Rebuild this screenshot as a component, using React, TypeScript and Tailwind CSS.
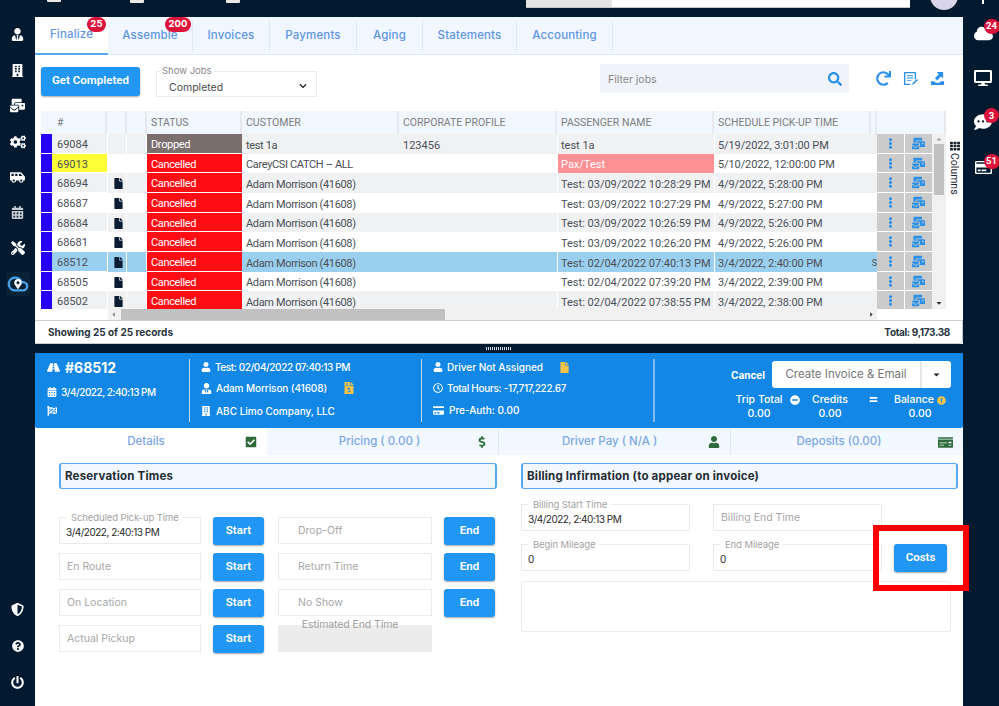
import {
  FaBuilding, FaCalendarAlt, FaCheckSquare, FaCloud, FaCogs, FaCommentDots, FaCreditCard, FaDesktop,
  FaDollarSign, FaEllipsisV, FaEquals, FaExclamationCircle, FaFile, FaFileInvoiceDollar, FaFlagCheckered,
  FaMailBulk, FaMapMarkerAlt, FaMinusCircle, FaMoneyCheck, FaPowerOff, FaQuestionCircle, FaRedo, FaRegClock,
  FaRegCreditCard, FaRoad, FaSearch, FaShieldAlt, FaShuttleVan, FaTh, FaTools, FaUser, FaUserTie,
  FaCaretDown, FaCaretLeft, FaCaretRight, FaCaretUp, FaChevronDown,
} from "react-icons/fa";
import { Cloud } from "lucide-react";

const ROW_GRID = "grid grid-cols-[11px_55px_20px_20px_95px_157px_158px_157px_157px_6px_28px_27px]";

const ROWS = [
  { id: "69084", status: "Dropped", customer: "test 1a", corp: "123456", pax: "test 1a", time: "5/19/2022, 3:01:00 PM" },
  { id: "69013", status: "Cancelled", customer: "CareyCSI CATCH – ALL", pax: "Pax/Test", time: "5/10/2022, 12:00:00 PM", flag: true },
  { id: "68694", status: "Cancelled", customer: "Adam Morrison (41608)", pax: "Test: 03/09/2022 10:28:29 PM", time: "4/9/2022, 5:28:00 PM", doc: true },
  { id: "68687", status: "Cancelled", customer: "Adam Morrison (41608)", pax: "Test: 03/09/2022 10:27:29 PM", time: "4/9/2022, 5:27:00 PM", doc: true },
  { id: "68684", status: "Cancelled", customer: "Adam Morrison (41608)", pax: "Test: 03/09/2022 10:26:59 PM", time: "4/9/2022, 5:26:00 PM", doc: true },
  { id: "68681", status: "Cancelled", customer: "Adam Morrison (41608)", pax: "Test: 03/09/2022 10:26:20 PM", time: "4/9/2022, 5:26:00 PM", doc: true },
  { id: "68512", status: "Cancelled", customer: "Adam Morrison (41608)", pax: "Test: 02/04/2022 07:40:13 PM", time: "3/4/2022, 2:40:00 PM", doc: true, selected: true },
  { id: "68505", status: "Cancelled", customer: "Adam Morrison (41608)", pax: "Test: 02/04/2022 07:39:20 PM", time: "3/4/2022, 2:39:00 PM", doc: true },
  { id: "68502", status: "Cancelled", customer: "Adam Morrison (41608)", pax: "Test: 02/04/2022 07:38:55 PM", time: "3/4/2022, 2:38:00 PM", doc: true },
];

const TABS = [
  { label: "Finalize", w: "w-[73px]", badge: "25", badgeClass: "top-[0px] left-[52px] w-[19px]" },
  { label: "Assemble", w: "w-[85px]", badge: "200", badgeClass: "-top-[3px] left-[57px] w-[26px]" },
  { label: "Invoices", w: "w-[77px]" },
  { label: "Payments", w: "w-[87px]" },
  { label: "Aging", w: "w-[66px]" },
  { label: "Statements", w: "w-[94px]" },
  { label: "Accounting", w: "w-[96px]" },
];

const MONT = "font-['Inter',sans-serif]";

function FloatInput({ label, value, className }: { label: string; value?: string; className: string }) {
  return (
    <div className={`relative h-[27px] border border-[#ebebeb] bg-white text-[10.5px] ${MONT} ${className}`}>
      {value ? (
        <>
          <span className="absolute -top-[6px] left-[7px] bg-white px-[4px] text-[9.5px] leading-[11px] tracking-[-0.1px] text-[#a3a3a3]">{label}</span>
          <div className="pl-[6px] pt-[8px] text-[10px] leading-[13px] tracking-[-0.5px] text-[#2b2b2b]">{value}</div>
        </>
      ) : (
        <div className="flex h-full items-center pl-[7px] text-[#a8a8a8]">{label}</div>
      )}
    </div>
  );
}

function BlueButton({ label, className }: { label: string; className: string }) {
  return (
    <button type="button" className={`rounded-[3px] bg-[#2196f3] text-[11.5px] font-semibold text-white shadow-[0_1px_2px_rgba(0,0,0,0.35)] ${className}`}>
      {label}
    </button>
  );
}

function SectionTitle({ label }: { label: string }) {
  return (
    <div className={`flex h-[26px] items-center rounded-[3px] border-2 border-[#55a9f2] border-y-[1.5px] bg-[#f2f8ff] pl-[4px] pt-[1px] text-[11.5px] font-bold tracking-[0.2px] text-[#232b33] ${MONT}`}>
      {label}
    </div>
  );
}

function Badge({ value, className }: { value: string; className: string }) {
  return (
    <span className={`absolute flex h-[15px] items-center justify-center rounded-full bg-[#dc143c] text-[9.5px] font-bold text-white ${className}`}>
      {value}
    </span>
  );
}

export default function App() {
  return (
    <div className="flex h-[706px] w-[999px] flex-col overflow-hidden bg-[#021a2f] font-['Roboto',sans-serif]">
      {/* top bar, cut by the window */}
      <header className="h-[17px] shrink-0 overflow-hidden">
        <div className="flex h-[8px] items-start">
          <div className="ml-[47px] h-[2px] w-[14px] rounded-b-[1px] bg-[#e8e8e8]" />
          <div className="ml-[69px] h-[3px] w-[14px] rounded-b-[1px] bg-[#e8e8e8]" />
          <div className="ml-[82px] h-[3px] w-[14px] rounded-b-[1px] bg-[#e8e8e8]" />
          <div className="ml-[286px] flex h-[8px] w-[384px] border-b border-[#c8c8c8] bg-white">
            <div className="h-full w-[86px] bg-[#e4e4e4]" />
          </div>
          <div className="ml-[20px] -mt-[18px] size-[28px] rounded-full bg-[#d9d5ea]" />
          <div className="ml-[24px] h-[4px] w-[2px] bg-white" />
        </div>
      </header>

      <div className="flex min-h-0 flex-1">
        {/* left rail */}
        <aside className="flex w-[35px] shrink-0 flex-col items-center pb-[5px] text-white [&>div]:flex [&>div]:w-full [&>div]:items-center [&>div]:justify-center">
          <div className="h-[35.6px]"><FaUserTie className="text-[13px]" /></div>
          <div className="h-[35.6px]"><FaBuilding className="text-[13px]" /></div>
          <div className="h-[35.6px]"><FaMailBulk className="text-[15px]" /></div>
          <div className="h-[35.6px]"><FaCogs className="text-[16px]" /></div>
          <div className="h-[35.6px]"><FaShuttleVan className="text-[15px]" /></div>
          <div className="h-[35.6px]"><FaCalendarAlt className="text-[13px] text-[#c9ced3]" /></div>
          <div className="h-[35.6px]"><FaTools className="text-[14px]" /></div>
          <div className="h-[35.6px]">
            <div className="relative flex h-[24px] w-[24px] items-center justify-center rounded-[2px] bg-[#0a2238]">
              <Cloud className="size-[22px] fill-[#0a2238] text-[#4aa3ea]" strokeWidth={2.6} />
              <FaMapMarkerAlt className="absolute text-[10px] text-white" />
            </div>
          </div>
          <div className="mt-auto h-[36.5px]"><FaShieldAlt className="text-[13px]" /></div>
          <div className="h-[36.5px]"><FaQuestionCircle className="text-[12px]" /></div>
          <div className="h-[36.5px]"><FaPowerOff className="text-[13px]" /></div>
        </aside>

        <main className="flex w-[928px] shrink-0 flex-col bg-white">
          {/* section tabs */}
          <nav className={`flex h-[38px] shrink-0 border-b border-[#d9eaf8] bg-[#f0f7ff] text-[11.5px] font-medium tracking-[0.15px] text-[#5f94e4] ${MONT}`}>
            {TABS.map((t, i) => (
              <div
                key={t.label}
                className={`relative flex items-center justify-center ${t.w} ${i === 0 ? "-mb-px border-b-2 border-[#55a9f2] bg-white" : "my-[3px] border-r border-[#dde9f5]"}`}
              >
                {t.label}
                {t.badge && <Badge value={t.badge} className={t.badgeClass} />}
              </div>
            ))}
          </nav>

          {/* toolbar */}
          <div className="flex h-[56px] shrink-0 items-start">
            <BlueButton label="Get Completed" className="ml-[6px] mt-[12px] h-[29px] w-[99px] pb-[2px]" />
            <div className={`relative ml-[16px] mt-[16px] flex h-[26px] w-[161px] items-center justify-between border border-[#ebebeb] pl-[12px] pr-[9px] text-[10.5px] text-[#4a4a4a] ${MONT}`}>
              <span className="absolute -top-[7px] left-[3px] bg-white px-[2px] text-[9.5px] leading-[11px] text-[#8a8a8a]">Show Jobs</span>
              <span className="pt-[8px]">Completed</span>
              <FaChevronDown className="mt-[3px] text-[8px] text-[#222]" />
            </div>
            <div className={`ml-[283px] mt-[9px] flex h-[29px] w-[249px] items-center justify-between bg-[#f0f3f9] pl-[8px] pr-[7px] text-[10.5px] text-[#8a8a8a] ${MONT}`}>
              <span className="pt-[2px]">Filter jobs</span>
              <FaSearch className="text-[14px] text-[#2b90e8]" />
            </div>
            <div className="ml-[27px] mt-[16px] flex items-center gap-[12px] text-[#2b90e8]">
              <FaRedo className="text-[15px]" />
              <svg viewBox="0 0 16 16" fill="currentColor" className="size-[15px]">
                <path d="M2 1h11a1 1 0 0 1 1 1v6l-1.5 1.5v-7h-10v11h5L8 15H2a1 1 0 0 1-1-1V2a1 1 0 0 1 1-1z" />
                <path d="M4 4.5h7v1H4zM4 7h7v1H4zM4 9.5h5v1H4z" />
                <path d="M15 8.5l1 1-4.5 4.5-1.8.6.6-1.8z" />
              </svg>
              <svg viewBox="0 0 16 16" fill="currentColor" className="size-[15px]">
                <path d="M14 1v7l-2.2-2.2L7.5 10 5.2 7.7l4.2-4.2L7.2 1z" />
                <path d="M1 11h3.5l1.5 1.5h4l1.5-1.5H15v3.5a.5.5 0 0 1-.5.5h-13a.5.5 0 0 1-.5-.5z" />
              </svg>
            </div>
          </div>

          {/* jobs table */}
          <div className="flex h-[209px] shrink-0 pl-[6px]">
            <div className="w-[905px]">
              <div className="grid h-[23px] grid-cols-[66px_20px_20px_95px_157px_158px_157px_157px_6px_1fr] bg-[#f0f7ff] text-[10.5px] text-[#7d7d7d]">
                {["#", "", "", "STATUS", "CUSTOMER", "CORPORATE PROFILE", "PASSENGER NAME", "SCHEDULE PICK-UP TIME", "", ""].map((h, i) => (
                  <div key={i} className={`flex items-center border-r-2 border-[#e6eaee] pl-[4px] ${i === 0 ? "pl-[16px]" : ""} ${i === 9 ? "border-r-0" : ""}`}>
                    {h}
                  </div>
                ))}
              </div>
              <div className="flex">
                <div className="h-[174.5px] w-[891px] overflow-hidden">
                  {ROWS.map((r, i) => {
                    const bg = r.selected ? "bg-[#9bcfef]" : i % 2 === 0 ? "bg-[#f0f1f3]" : "bg-white";
                    return (
                      <div key={r.id} className={`${ROW_GRID} ${i % 3 === 1 ? "h-[19px]" : "h-[20px]"} text-[11px] leading-[13px] text-[#4a4f55] ${bg}`}>
                        <div className="border-b border-white bg-[#2500f5]" />
                        <div className={`flex items-center border-b border-white pl-[5px] pt-[2px] ${r.flag ? "bg-[#ffff38]" : ""}`}>{r.id}</div>
                        <div className="flex items-center justify-center border-x border-white pl-[2px] pt-[1px]">
                          {r.doc && <FaFile className="text-[11px] text-[#0b1d33]" />}
                        </div>
                        <div className="border-r border-white" />
                        <div className={`flex items-center border-b border-white pl-[4px] pt-[2px] tracking-[-0.35px] text-white ${r.status === "Dropped" ? "bg-[#7b6f6d]" : "bg-[#ff0d14]"}`}>
                          {r.status}
                        </div>
                        <div className="flex items-center pl-[4px] pt-[2px] tracking-[-0.35px]">{r.customer}</div>
                        <div className="flex items-center pl-[4px] pt-[2px]">{r.corp}</div>
                        <div className={`flex items-center border-l border-white pl-[3px] pt-[2px] ${r.flag ? "bg-[#ff9094] text-white" : ""}`}>{r.pax}</div>
                        <div className="flex items-center border-l border-white pl-[3px] pt-[2px] tracking-[-0.1px]">{r.time}</div>
                        <div className="flex items-center justify-end overflow-hidden pt-[2px] text-[9px]">{r.selected ? "S" : ""}</div>
                        <div className="flex items-center justify-center border-b border-r border-white bg-[#cbcbcb]">
                          <FaEllipsisV className="text-[11px] text-[#2b90e8]" />
                        </div>
                        <div className="flex items-center justify-center border-b border-white bg-[#cbcbcb]">
                          <FaMailBulk className="text-[13px] text-[#2b90e8]" />
                        </div>
                      </div>
                    );
                  })}
                </div>
                <div className="flex h-[174.5px] w-[14px] flex-col items-center bg-[#f1f1f1]">
                  <FaCaretUp className="mt-[1px] text-[8px] text-[#a8a8a8]" />
                  <div className="mt-[1px] h-[51px] w-[10px] bg-[#c1c1c1]" />
                  <FaCaretDown className="mb-[2px] mt-auto text-[8px] text-[#333]" />
                </div>
              </div>
              <div className="flex h-[11.5px]">
                <div className="w-[67px]" />
                <div className="flex w-[769px] items-center bg-[#f1f1f1]">
                  <FaCaretLeft className="ml-[2px] text-[7px] text-[#888]" />
                  <div className="ml-[4px] h-full w-[324px] bg-[#c1c1c1]" />
                  <FaCaretRight className="ml-auto mr-[2px] text-[7px] text-[#444]" />
                </div>
              </div>
            </div>
            <div className="flex w-[17px] flex-col items-center pt-[30px] text-[#1d2733]">
              <FaTh className="text-[10px]" />
              <span className="mt-[2px] text-[10.5px] [writing-mode:vertical-rl]">Columns</span>
            </div>
          </div>

          {/* totals */}
          <div className={`flex h-[24px] shrink-0 items-center justify-between rounded-br-[4px] border-y border-r border-[#c9ced3] pl-[13px] pr-[12px] text-[10px] font-bold text-[#2a3540] ${MONT}`}>
            <span>Showing 25 of 25 records</span>
            <span className="tracking-[-0.35px]">Total: 9,173.38</span>
          </div>

          {/* splitter */}
          <div className="-mx-px flex h-[9px] shrink-0 items-center justify-center bg-[#021a2f]">
            <div className="h-[3px] w-[26px] bg-[repeating-linear-gradient(90deg,#d7dde2_0,#d7dde2_1px,transparent_1px,transparent_2px)]" />
          </div>

          {/* selected job */}
          <section className={`flex h-[75px] shrink-0 rounded-b-[2px] bg-[#1387e6] text-[10px] font-medium text-white ${MONT}`}>
            <div className="w-[154px] pl-[12px] pt-[6px]">
              <div className="flex items-center gap-[5px] text-[14px] font-bold leading-[17px]">
                <FaRoad className="text-[13px]" /> #68512
              </div>
              <div className="mt-[9px] flex items-center gap-[4px] leading-[14px] tracking-[-0.5px]">
                <FaCalendarAlt className="text-[10px]" /> 3/4/2022, 2:40:13 PM
              </div>
              <FaFlagCheckered className="mt-[7px] text-[10px]" />
            </div>
            <div className="my-[6px] w-[232px] border-l border-[#b7dbf7] pl-[11px]">
              <div className="flex h-[16px] items-center gap-[4px] tracking-[-0.4px]"><FaUser className="text-[10px]" /> Test: 02/04/2022 07:40:13 PM</div>
              <div className="mt-[5px] flex h-[16px] items-center gap-[4px] tracking-[-0.1px]">
                <FaUserTie className="text-[11px]" /> Adam Morrison (41608)
                <FaFileInvoiceDollar className="ml-[12px] text-[12px] text-[#f2c34b]" />
              </div>
              <div className="mt-[7px] flex h-[16px] items-center gap-[5px]"><FaBuilding className="text-[10px]" /> ABC Limo Company, LLC</div>
            </div>
            <div className="my-[6px] w-[232px] border-l border-[#b7dbf7] pl-[11px]">
              <div className="flex h-[16px] items-center gap-[4px]">
                <FaUser className="text-[10px]" /> Driver Not Assigned
                <FaFile className="ml-[12px] text-[11px] text-[#f2c34b]" />
              </div>
              <div className="mt-[5px] flex h-[16px] items-center gap-[4px] tracking-[-0.3px]"><FaRegClock className="text-[10px]" /> Total Hours: -17,717,222.67</div>
              <div className="mt-[6px] flex h-[16px] items-center gap-[5px]"><FaCreditCard className="text-[11px]" /> Pre-Auth: 0.00</div>
            </div>
            <div className="my-[6px] flex-1 border-l-2 border-[#7fbdf0] pr-[12px] pt-[2px]">
              <div className="flex items-center justify-end">
                <span className="mr-[7px] pt-[1px] font-bold">Cancel</span>
                <div className="flex h-[27px] w-[179px] overflow-hidden rounded-[3px] bg-white text-[11.5px] font-normal text-[#777]">
                  <div className="flex flex-1 items-center justify-center">Create Invoice &amp; Email</div>
                  <div className="flex w-[31px] items-center justify-center border-l-2 border-[#e6e6e6]">
                    <FaCaretDown className="text-[9px] text-[#222]" />
                  </div>
                </div>
              </div>
              <div className="mt-[5px] flex whitespace-nowrap pl-[79px] text-[10.5px] text-white">
                <div className="w-[50px] text-center leading-[14px]">Trip Total<div>0.00</div></div>
                <div className="w-[22px] pt-[2px]"><FaMinusCircle className="mx-auto text-[10px]" /></div>
                <div className="w-[48px] text-center leading-[14px]">Credits<div>0.00</div></div>
                <div className="w-[38px] pt-[2px]"><FaEquals className="mx-auto text-[9px]" /></div>
                <div className="w-[56px] text-center leading-[14px]">
                  <span className="inline-flex items-center gap-[3px]">Balance <FaExclamationCircle className="text-[9px] text-[#f2c34b]" /></span>
                  <div>0.00</div>
                </div>
              </div>
            </div>
          </section>

          {/* detail tabs */}
          <div className={`flex h-[27px] shrink-0 bg-[#f2f8ff] pt-px text-[11.5px] font-medium text-[#7ea6e6] ${MONT}`}>
            <div className="relative -mt-px flex w-[232px] items-center justify-center bg-white pr-[10px] pt-px">
              Details
              <FaCheckSquare className="absolute right-[10px] text-[12px] text-[#2f6b3a]" />
            </div>
            <div className="relative flex w-[232px] items-center justify-center border-r border-[#dde9f5] pr-[6px]">
              Pricing ( 0.00 )
              <FaDollarSign className="absolute right-[10px] text-[12px] text-[#2f6b3a]" />
            </div>
            <div className="relative flex w-[232px] items-center justify-center border-r border-[#dde9f5] pr-[10px]">
              Driver Pay ( N/A )
              <FaUser className="absolute right-[10px] text-[12px] text-[#2f6b3a]" />
            </div>
            <div className="relative flex w-[232px] items-center justify-center pr-[16px]">
              Deposits (0.00)
              <FaMoneyCheck className="absolute right-[10px] text-[15px] text-[#2f6b3a]" />
            </div>
          </div>

          {/* reservation and billing forms */}
          <div className="flex gap-[24px] pl-[24px] pr-[5px] pt-[8px]">
            <div className="w-[438px]">
              <SectionTitle label="Reservation Times" />
              <div className="mt-[28px] grid grid-cols-[142px_53px_154px_51px] gap-x-[12px] gap-y-[8px]">
                <FloatInput label="Scheduled Pick-up Time" value="3/4/2022, 2:40:13 PM" className="" />
                <BlueButton label="Start" className="h-[28px] w-[51px]" />
                <FloatInput label="Drop-Off" className="[&>div]:pl-[19px]" />
                <BlueButton label="End" className="h-[28px]" />
                <FloatInput label="En Route" className="" />
                <BlueButton label="Start" className="h-[28px] w-[51px]" />
                <FloatInput label="Return Time" className="[&>div]:pl-[19px]" />
                <BlueButton label="End" className="h-[28px]" />
                <FloatInput label="On Location" className="" />
                <BlueButton label="Start" className="h-[28px] w-[51px]" />
                <FloatInput label="No Show" className="[&>div]:pl-[19px]" />
                <BlueButton label="End" className="h-[28px]" />
                <FloatInput label="Actual Pickup" className="" />
                <BlueButton label="Start" className="h-[28px] w-[51px]" />
                <div className={`h-[27px] bg-[#ececec] pr-[10px] text-center text-[10.5px] tracking-[-0.1px] text-[#a0a0a0] ${MONT}`}>
                  <span className="relative -top-[8px]">Estimated End Time</span>
                </div>
              </div>
            </div>
            <div className="relative w-[437px]">
              <SectionTitle label="Billing Infirmation (to appear on invoice)" />
              <div className="mt-[15px] grid grid-cols-[169px_169px_53px] gap-x-[23px] gap-y-[13px]">
                <FloatInput label="Billing Start Time" value="3/4/2022, 2:40:13 PM" className="" />
                <FloatInput label="Billing End Time" className="" />
                <div />
                <FloatInput label="Begin Mileage" value="0" className="" />
                <FloatInput label="End Mileage" value="0" className="" />
                <BlueButton label="Costs" className="-ml-[11px] h-[28px] w-[53px]" />
              </div>
              <div className="mt-[9px] h-[51px] w-[430px] rounded-[2px] border border-[#ebebeb]" />
              {/* highlight drawn over the screenshot */}
              <div className="absolute left-[352px] top-[62px] h-[66px] w-[96px] border-[6px] border-[#ff0000]" />
            </div>
          </div>
        </main>

        {/* right rail */}
        <aside className="flex w-[36px] shrink-0 flex-col items-center pl-[4px] text-white [&>div]:flex [&>div]:h-[44.6px] [&>div]:items-center">
          <div className="-mt-[6px]">
            <div className="relative">
              <FaCloud className="text-[19px]" />
              <Badge value="24" className="-right-[7px] -top-[5px] w-[16px]" />
            </div>
          </div>
          <div><FaDesktop className="text-[18px]" /></div>
          <div>
            <div className="relative">
              <FaCommentDots className="text-[18px]" />
              <Badge value="3" className="-right-[7px] -top-[5px] w-[15px]" />
            </div>
          </div>
          <div>
            <div className="relative">
              <FaRegCreditCard className="text-[17px]" />
              <Badge value="51" className="-right-[8px] -top-[5px] w-[16px]" />
            </div>
          </div>
        </aside>
      </div>
    </div>
  );
}
